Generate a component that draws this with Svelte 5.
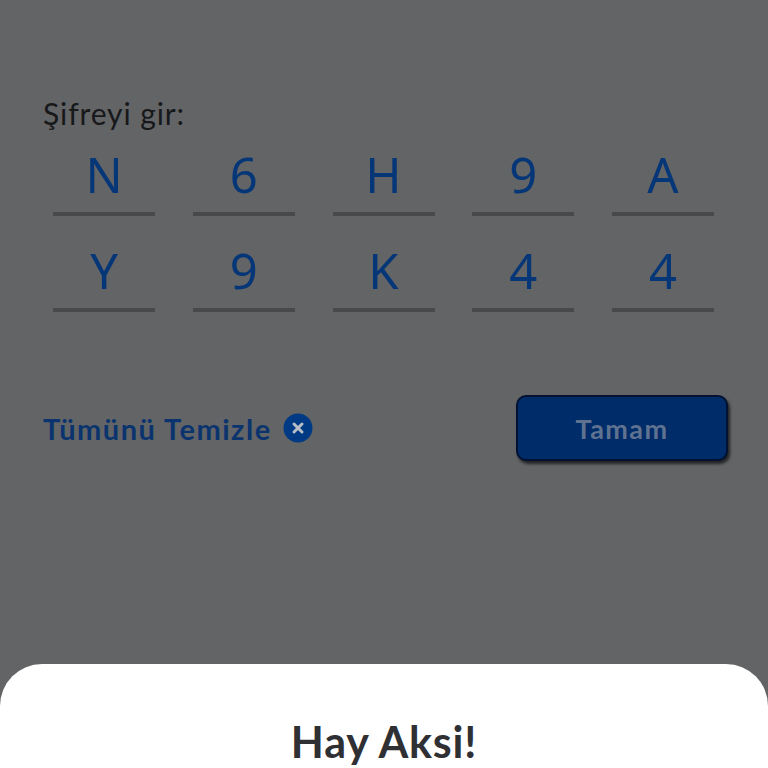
<script lang="ts">
  const rows: string[][] = [
    ['N', '6', 'H', '9', 'A'],
    ['Y', '9', 'K', '4', '4']
  ]
</script>

<div class="page">
  <div class="form">
    <p class="label">Şifreyi gir:</p>

    {#each rows as row}
      <div class="row">
        {#each row as ch}
          <div class="cell">{ch}</div>
        {/each}
      </div>
    {/each}

    <div class="actions">
      <div class="clear">
        <span>Tümünü Temizle</span>
        <svg width="30" height="30" viewBox="0 0 30 30">
          <circle cx="15" cy="15" r="14.5" fill="#003a84" />
          <path d="M11 11l8 8M19 11l-8 8" stroke="#b9bec6" stroke-width="3" stroke-linecap="round" />
        </svg>
      </div>
      <button class="ok">Tamam</button>
    </div>
  </div>

  <div class="sheet">
    <h2>Hay Aksi!</h2>
  </div>
</div>

<style>
  :global(body) {
    margin: 0;
  }

  .page {
    height: 768px;
    overflow: hidden;
    display: flex;
    flex-direction: column;
    justify-content: space-between;
    background-color: #636466;
    font-family: "Lato", "Noto Sans", sans-serif;
  }

  .form {
    padding: 95px 40px 0 43px;
  }

  .label {
    margin: 0 0 13px;
    font-size: 30px;
    line-height: 36px;
    letter-spacing: 0.9px;
    color: #17181a;
  }

  .row {
    display: grid;
    grid-template-columns: repeat(5, 102px);
    column-gap: 37.75px;
    margin-left: 10px;
  }

  .cell {
    height: 72px;
    margin-bottom: 24px;
    font-family: "Noto Sans", sans-serif;
    font-size: 49px;
    line-height: 60px;
    text-align: center;
    color: #053677;
    border-bottom: 4px solid #48494b;
    box-sizing: border-box;
  }

  .actions {
    display: flex;
    align-items: center;
    justify-content: space-between;
    margin-top: 59px;
  }

  .clear {
    display: flex;
    align-items: center;
    gap: 11px;
    font-size: 29px;
    font-weight: 700;
    letter-spacing: 1.5px;
    color: #0b346f;
  }

  .ok {
    width: 212px;
    height: 66px;
    border: 2px solid #001233;
    border-radius: 10px;
    background-color: #002c69;
    box-shadow: 2px 3px 3px #232426;
    font-family: inherit;
    font-size: 27px;
    font-weight: 700;
    letter-spacing: 1.4px;
    color: #5f7290;
  }

  .sheet {
    height: 104px;
    box-sizing: border-box;
    padding-top: 54px;
    background-color: #fff;
    border-radius: 42px 42px 0 0;
    text-align: center;
  }

  h2 {
    margin: 0;
    font-size: 43px;
    line-height: 48px;
    font-weight: 700;
    letter-spacing: 0.8px;
    color: #2f3033;
  }
</style>
